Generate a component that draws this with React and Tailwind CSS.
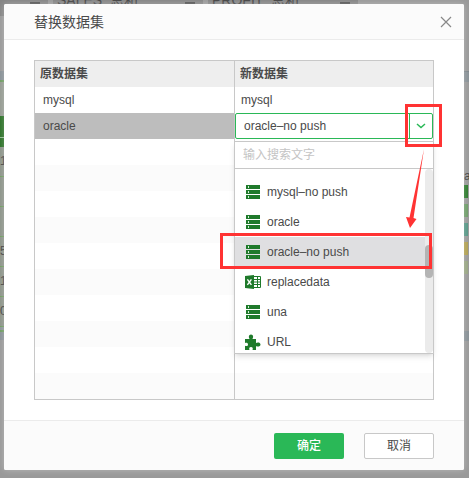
import clsx from 'clsx'

const datasets = [
  { name: 'mysql–no push', type: 'table' },
  { name: 'oracle', type: 'table' },
  { name: 'oracle–no push', type: 'table' },
  { name: 'replacedata', type: 'excel' },
  { name: 'una', type: 'table' },
  { name: 'URL', type: 'plugin' },
]

const emptyRows = Array.from({ length: 10 }, (_, i) => i)

function TableIcon() {
  return (
    <svg width="16" height="16" viewBox="0 0 16 16" shapeRendering="crispEdges" aria-hidden="true">
      <path fill="#1f7a2b" d="M1 1h14v4H1zM1 6h14v4H1zM1 11h14v4H1z" />
      <path fill="#d5f0d8" d="M3 2h1v2H3zM3 7h1v2H3zM3 12h1v2H3z" />
    </svg>
  )
}

function ExcelIcon() {
  return (
    <svg width="16" height="16" viewBox="0 0 16 16" aria-hidden="true">
      <path fill="#1f7a2b" d="M0 2l9-1v14l-9-1z" />
      <path stroke="#fff" strokeWidth="1.4" d="M2.4 5.4l4 5.4M6.4 5.4l-4 5.4" />
      <path fill="none" stroke="#1f7a2b" d="M9 2.500h6.500v11H9M9 5.500h6M9 8h6M9 10.500h6M12.500 3v10" />
    </svg>
  )
}

function PluginIcon() {
  return (
    <svg width="16" height="16" viewBox="0 0 16 16" aria-hidden="true">
      <path
        fill="#1f7a2b"
        d="M0 5h4.600C3.400 3.400 3.600 0.500 6 0.500S8.600 3.400 7.400 5H11v4c1.200-1 4.500-.9 4.500 1.500S12.200 13 11 12v4H7.500c.8-1.800 0-2.900-1.500-2.900S3.700 14.200 4.500 16H0v-4.300c1.700.7 3 .1 3-1.300S1.700 8.400 0 9z"
      />
    </svg>
  )
}

const icons = { table: TableIcon, excel: ExcelIcon, plugin: PluginIcon }

function Dashboard() {
  return (
    <div className="absolute inset-0 overflow-hidden bg-[#999] text-xs text-[#444]" aria-hidden="true">
      <div className="flex h-4 gap-[5px]">
        <div className="flex w-12 justify-end bg-[#858585] pr-2">
          <span className="mt-[2px] h-[2px] w-[10px] bg-[#555]" />
        </div>
        {['SALES_总和', 'PROFIT_总和'].map((field) => (
          <div key={field} className="flex w-[150px] justify-between bg-[#858585] px-1">
            <span className="-mt-2 text-sm leading-4">{field}</span>
            <span className="mr-1 mt-[2px] h-[2px] w-[10px] bg-[#555]" />
          </div>
        ))}
      </div>
      <div className="flex justify-between">
        <div className="mt-[55px] w-20 leading-[29px]">
          <div className="h-[9px] bg-[#899196]" />
          <div className="h-9 border-t-2 border-[#6f9d62] bg-[#959b92]" />
          <div className="h-[22px] border-b border-[#94b994] bg-[#2d7229]" />
          <div className="h-[9px] bg-[#2d7229]" />
          {['1', '', '', '5', '1', '0'].map((value, i) => (
            <div key={i} className="h-[30px] border-b border-[#6f9d62] bg-[#8d948a]">{value}</div>
          ))}
          <div className="h-[5px] border-b-2 border-[#6f9d62] bg-[#8e9699]" />
          <div className="h-2 bg-[#899196]" />
        </div>
        <div className="mt-[55px] w-[5px]">
          <div className="h-[11px] border-t border-[#7d858a] bg-[#899196]" />
          <div className="mt-[86px] leading-4">a</div>
          <div className="mt-px flex flex-col gap-[6px]">
            <div className="h-[13px] w-1 bg-[#2d7a2d]" />
            <div className="h-[13px] w-1 bg-[#6f9d6a]" />
            <div className="h-[13px] w-1 bg-[#579786]" />
            <div className="h-[13px] w-1 bg-[#b0a052]" />
            <div className="h-[13px] w-1 bg-[#98a583]" />
          </div>
          <div className="mt-[57px] h-[10px] bg-[#899196]" />
        </div>
      </div>
    </div>
  )
}

function DatasetPopup({ selected }) {
  return (
    <div className="absolute -left-px -right-px top-7 z-10 border border-[#c8c8c8] bg-white shadow-md">
      <input
        type="text"
        aria-label="输入搜索文字"
        placeholder="输入搜索文字"
        className="block h-[27px] w-full border-b border-[#c8c8c8] px-2 text-xs outline-none placeholder:text-[#c4c4c4]"
      />
      <div className="flex h-[184px] overflow-hidden">
        <ul className="min-w-0 flex-1 pt-2" role="listbox" aria-label="新数据集">
          {datasets.map((d) => {
            const Icon = icons[d.type]
            return (
              <li
                key={d.name}
                role="option"
                aria-selected={d.name === selected}
                className={clsx('flex h-[30px] items-center gap-[6px] pl-[10px]', d.name === selected && 'bg-[#dfdfe1]')}
              >
                <Icon />
                {d.name}
              </li>
            )
          })}
        </ul>
        <div className="w-2 rounded-full bg-[#ebebeb] pt-[76px]">
          <div className="h-[33px] rounded-full bg-[#b4b4b4]" />
        </div>
      </div>
      {/* callout for the picked item */}
      <div className="absolute -left-[15px] right-[1px] top-[91px] h-9 border-[3px] border-[#ff3333]" />
      <svg className="absolute right-1 top-[7px]" width="24" height="80" viewBox="0 0 24 80" aria-hidden="true">
        <path fill="#ff3333" d="M19 0L8.500 69l3 1-6.500 9-4-11 3.500.5z" />
      </svg>
    </div>
  )
}

function DatasetSelect({ value }) {
  return (
    <div className="relative h-[26px]">
      <div className="flex h-full rounded-xs border border-[#2ab857] bg-white">
        <input
          type="text"
          aria-label="新数据集"
          readOnly
          value={value}
          className="min-w-0 flex-1 px-2 text-xs outline-none"
        />
        <button type="button" aria-label="展开" className="relative flex w-[23px] items-center justify-center border-l border-[#2ab857]">
          <svg width="10" height="6" viewBox="0 0 10 6" fill="none" stroke="#2ab857" strokeWidth="1.500" aria-hidden="true">
            <path d="M1 1l4 3.500L9 1" />
          </svg>
          <span className="absolute -left-[5px] -right-[10px] -top-[10px] z-20 h-[43px] border-[3px] border-[#ff3333]" />
        </button>
      </div>
      <DatasetPopup selected={value} />
    </div>
  )
}

export default function App() {
  return (
    <div className="relative flex min-h-screen pb-2 pl-1 pr-[5px] pt-1 font-['Liberation_Sans','Noto_Sans_CJK_SC',sans-serif] text-xs text-[#4a4a4a]">
      <Dashboard />
      <div role="dialog" aria-label="替换数据集" className="relative flex flex-1 flex-col rounded-xs bg-white shadow-[0_0_6px_rgba(255,255,255,0.3)]">
        <header className="flex h-9 items-center justify-between rounded-t-xs border-b border-[#ebebeb] bg-[#fbfbfb] pl-[30px] pr-3">
          <h1 className="text-sm">替换数据集</h1>
          <button type="button" aria-label="关闭" className="flex h-3 w-3 items-center justify-center">
            <svg width="12" height="12" viewBox="0 0 12 12" stroke="#888" strokeWidth="1.200" aria-hidden="true">
              <path d="M1 1l10 10M11 1L1 11" />
            </svg>
          </button>
        </header>

        <main className="flex-1 px-[30px] py-5">
          <table className="w-full table-fixed border-separate border-spacing-0 border border-[#c8c8c8] text-left">
            <thead>
              <tr className="h-[26px] bg-[#eee]">
                <th className="w-[200px] border-r border-[#c8c8c8] p-0 pl-[5px] leading-4">原数据集</th>
                <th className="p-0 pl-[5px] leading-4">新数据集</th>
              </tr>
            </thead>
            <tbody>
              <tr className="h-[26px]">
                <td className="border-r border-[#c8c8c8] p-0 pl-2">mysql</td>
                <td className="p-0 pl-[6px]">mysql</td>
              </tr>
              <tr className="h-[26px]">
                <td className="border-r border-[#c8c8c8] bg-[#bdbdbd] p-0 pl-2">oracle</td>
                <td className="p-0"><DatasetSelect value="oracle–no push" /></td>
              </tr>
              {emptyRows.map((row) => (
                <tr key={row} className="h-[26px] even:bg-[#fbfbfb]">
                  <td className="border-r border-[#c8c8c8] p-0" />
                  <td className="p-0" />
                </tr>
              ))}
            </tbody>
          </table>
        </main>

        <footer className="flex h-[50px] items-start justify-end gap-5 rounded-b-xs border-t border-[#ebebeb] bg-[#fbfbfb] px-[30px] pt-3">
          <button type="button" className="h-[26px] w-[70px] rounded-xs bg-[#2ab857] font-medium text-white">确定</button>
          <button type="button" className="h-[26px] w-[70px] rounded-xs border border-[#c8c8c8] bg-white">取消</button>
        </footer>
      </div>
    </div>
  )
}
